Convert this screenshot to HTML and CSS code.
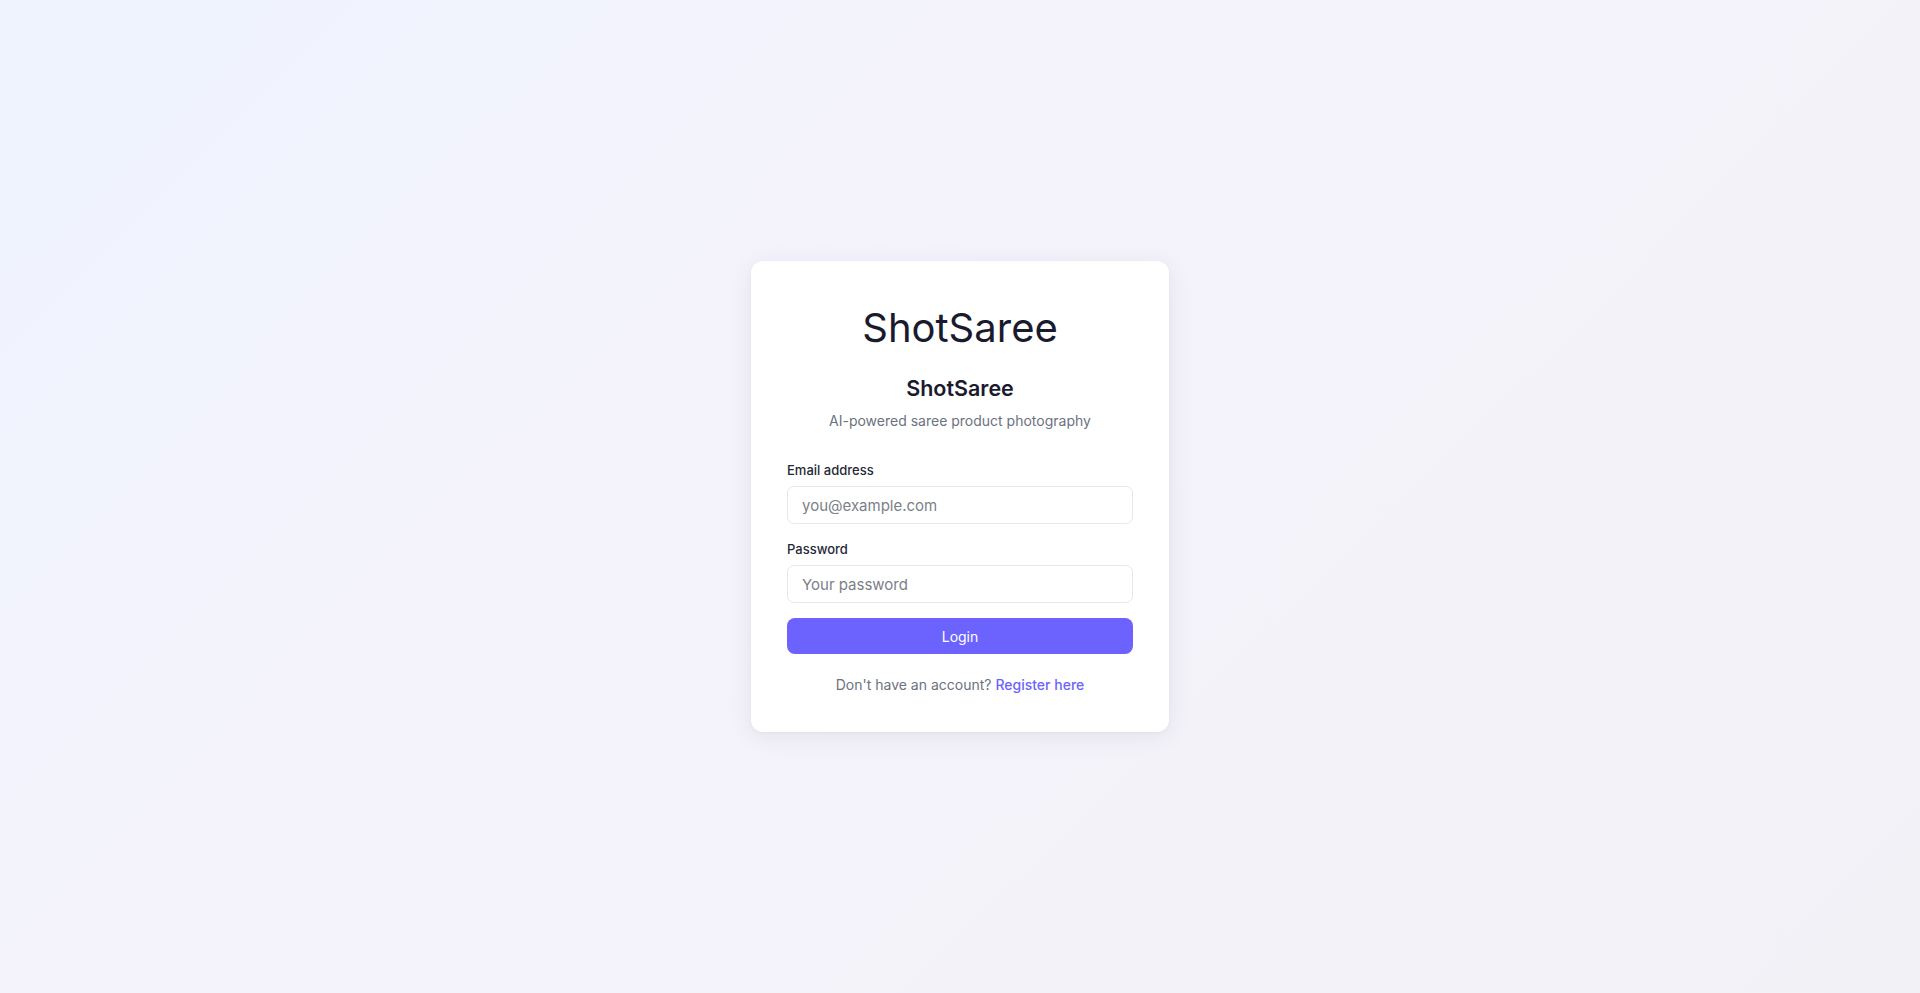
FILE: index.html
```html
<!DOCTYPE html>
<html lang="en">
<head>
<meta charset="utf-8">
<title>ShotSaree - Login</title>
<link rel="stylesheet" href="styles.css">
</head>
<body>
<main class="page">
  <section class="card">
    <div class="logo">ShotSaree</div>
    <h2 class="title">ShotSaree</h2>
    <p class="subtitle">AI-powered saree product photography</p>
    <form class="form">
      <div class="field">
        <label class="label" for="email">Email address</label>
        <input class="input" id="email" type="email" placeholder="you@example.com">
      </div>
      <div class="field">
        <label class="label" for="password">Password</label>
        <input class="input" id="password" type="password" placeholder="Your password">
      </div>
      <button class="btn" type="button">Login</button>
    </form>
    <p class="footer">Don't have an account? <a class="link" href="#">Register here</a></p>
  </section>
</main>
</body>
</html>
```
FILE: styles.css
```css
* { box-sizing: border-box; }
html, body { margin: 0; padding: 0; height: 100%; }
body {
  font-family: Inter, "Noto Sans", sans-serif;
  background: linear-gradient(135deg, #eef3fe 0%, #f4f3fc 35%, #f2f1f6 100%);
  color: #1a1a2e;
}
.page {
  min-height: 100vh;
  display: flex;
  align-items: center;
  justify-content: center;
}
.card {
  width: 418px;
  background: #ffffff;
  border-radius: 12px;
  box-shadow: 0 4px 24px rgba(30, 30, 60, 0.07), 0 1px 3px rgba(30, 30, 60, 0.04);
  padding: 43px 36px 37px;
  text-align: center;
}
.logo {
  font-size: 40px;
  line-height: 48px;
  font-weight: 400;
  color: #1a1a2e;
}
.title {
  margin: 22px 0 0;
  font-size: 21.5px;
  line-height: 28px;
  font-weight: 600;
  color: #1a1a2e;
}
.subtitle {
  margin: 9px 0 0;
  font-size: 14px;
  line-height: 20px;
  color: #6b7280;
}
.form {
  margin-top: 29px;
  text-align: left;
  display: flex;
  flex-direction: column;
}
.field { display: flex; flex-direction: column; margin-bottom: 15px; }
.label {
  font-size: 13px;
  line-height: 20px;
  font-weight: 500;
  color: #1f2937;
  margin-bottom: 6px;
}
.input {
  height: 38px;
  border: 1px solid #e5e7eb;
  border-radius: 7px;
  padding: 0 14px;
  font-family: inherit;
  font-size: 15px;
  color: #1a1a2e;
  background: #fff;
  outline: none;
}
.input::placeholder { color: #7b7f89; }
.btn {
  height: 36px;
  border: none;
  border-radius: 8px;
  background: #6c63ff;
  color: #fff;
  font-family: inherit;
  font-size: 14px;
  font-weight: 400;
  cursor: pointer;
}
.footer {
  margin: 21px 0 0;
  font-size: 14px;
  line-height: 20px;
  color: #6b7280;
}
.link { color: #6c63ff; text-decoration: none; font-weight: 500; }
```
